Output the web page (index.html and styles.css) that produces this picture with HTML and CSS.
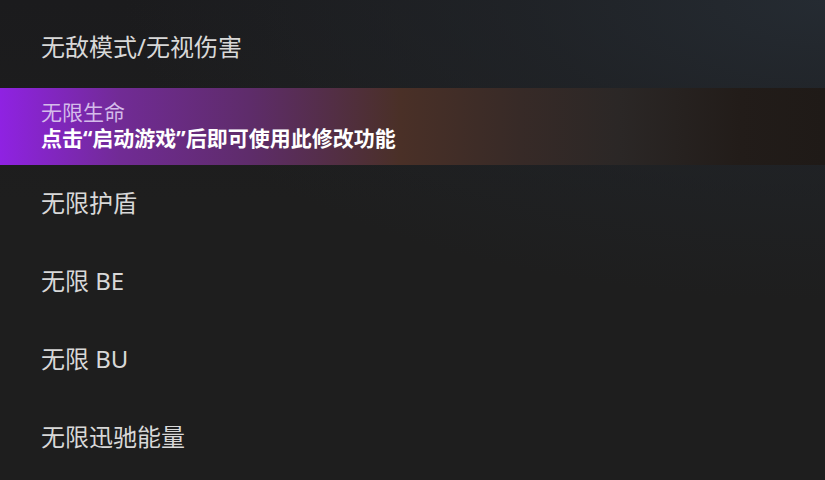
FILE: index.html
```html
<!DOCTYPE html>
<html lang="zh-CN">
<head>
  <meta charset="UTF-8" />
  <meta name="viewport" content="width=device-width, initial-scale=1.0"/>
  <title>修改器</title>
  <link rel="stylesheet" href="styles.css">
</head>
<body>
  <ul class="cheat-list">
    <li class="cheat">无敌模式/无视伤害</li>
    <li class="cheat active">
      <div class="cheat-name">无限生命</div>
      <div class="cheat-hint">点击“启动游戏”后即可使用此修改功能</div>
    </li>
    <li class="cheat">无限护盾</li>
    <li class="cheat">无限 BE</li>
    <li class="cheat">无限 BU</li>
    <li class="cheat">无限迅驰能量</li>
  </ul>
</body>
</html>
```

FILE: styles.css
```css
html, body {
  height: 100%;
}
body {
  margin: 0;
  overflow: hidden;
  font-family: "Noto Sans", "Noto Sans CJK SC", sans-serif;
  color: #d8d8d8;
  background:
    radial-gradient(ellipse 700px 300px at 100% 0%, #252b32 0%, rgba(33,37,42,0.7) 45%, rgba(30,30,30,0) 100%),
    linear-gradient(180deg, #1b1b1d 0px, #1e1e1e 200px);
  background-color: #1e1e1e;
}
.cheat-list {
  list-style: none;
  margin: 0;
  padding: 10px 0 0;
}
.cheat {
  height: 78px;
  display: flex;
  flex-direction: column;
  justify-content: center;
  padding: 0 41px 4px;
  font-size: 24px;
  line-height: 1;
  box-sizing: border-box;
}
.cheat.active {
  height: 77px;
  padding-bottom: 1px;
  background: linear-gradient(90deg, #8f22e2 0px, #712b95 120px, #5e2c6a 250px, #4a3027 400px, #372a27 520px, #2b2726 620px, #221c19 740px, #1f1a17 825px);
}
.active + .cheat {
  height: 79px;
}
.cheat-name {
  font-size: 21px;
  color: #d4bbea;
  line-height: 25px;
}
.cheat-hint {
  font-size: 21px;
  font-weight: bold;
  color: #ffffff;
  line-height: 27px;
}
```
